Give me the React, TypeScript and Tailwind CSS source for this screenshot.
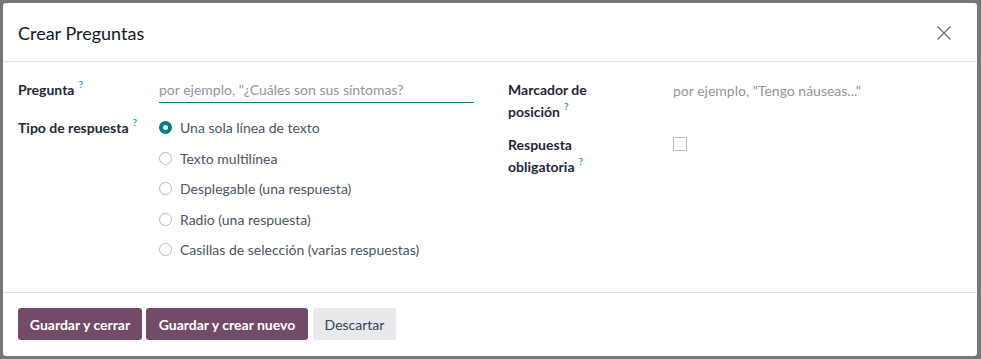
import React, { useState } from 'react';

const font = "font-['Lato','Noto_Sans',sans-serif]";

const Help = () => (
  <span className="inline-block align-top ml-[4px] text-[10px] leading-[10px] font-bold text-[#1f9ec2]">?</span>
);

const options = [
  'Una sola línea de texto',
  'Texto multilínea',
  'Desplegable (una respuesta)',
  'Radio (una respuesta)',
  'Casillas de selección (varias respuestas)',
];

export default function App() {
  const [selected, setSelected] = useState(0);
  const [required, setRequired] = useState(false);

  return (
    <div className={`w-[981px] h-[359px] bg-[#767676] pt-[3px] pl-[3px] pr-[4px] pb-[3px] ${font}`}>
      <div className="h-full bg-white rounded-[3px] flex flex-col text-[14px] text-[#374151]">
        {/* Header */}
        <div className="flex-none h-[59px] px-[15px] pt-[2px] flex items-center justify-between border-b border-[#dee2e6]">
          <h2 className="text-[18px] text-[#111827] leading-none">Crear Preguntas</h2>
          <button className="w-[16px] h-[16px] mr-[10px] text-[#6b7280]">
            <svg viewBox="0 0 16 16" width="16" height="16" fill="none" stroke="currentColor" strokeWidth="1.3">
              <path d="M1.5 1.5 L14.5 14.5 M14.5 1.5 L1.5 14.5" />
            </svg>
          </button>
        </div>

        {/* Body */}
        <div className="flex-1 px-[15px] pt-[17px] flex gap-[34px]">
          {/* Left column */}
          <div className="w-[456px] flex flex-col">
            <div className="flex h-[24px]">
              <label className="w-[141px] font-bold text-[#1f2937] leading-[21px]">
                Pregunta<Help />
              </label>
              <div className="flex-1 border-b border-[#017e84]">
                <input
                  className="w-full leading-[21px] h-[21px] outline-none placeholder:text-[#8f96a0] text-[#374151]"
                  placeholder={'por ejemplo, "¿Cuáles son sus síntomas?'}
                />
              </div>
            </div>
            <div className="flex mt-[14px]">
              <label className="w-[141px] font-bold text-[#1f2937] leading-[21px]">
                Tipo de respuesta<Help />
              </label>
              <div className="flex flex-col gap-[9.5px]">
                {options.map((o, i) => (
                  <label key={o} className="flex items-center gap-[8px] leading-[21px] cursor-pointer text-[#4b5563]" onClick={() => setSelected(i)}>
                    {selected === i ? (
                      <span className="w-[13px] h-[13px] rounded-full border-[4px] border-[#017e84] bg-white" />
                    ) : (
                      <span className="w-[13px] h-[13px] rounded-full border border-[#b5bbc2] bg-white" />
                    )}
                    <span>{o}</span>
                  </label>
                ))}
              </div>
            </div>
          </div>

          {/* Right column */}
          <div className="flex-1 flex flex-col">
            <div className="flex">
              <label className="w-[165px] font-bold text-[#1f2937] leading-[22px] pr-[60px]">
                Marcador de posición<Help />
              </label>
              <input
                className="flex-1 leading-[21px] h-[22px] outline-none placeholder:text-[#8f96a0]"
                placeholder={'por ejemplo, "Tengo náuseas..."'}
              />
            </div>
            <div className="flex mt-[11px]">
              <label className="w-[165px] font-bold text-[#1f2937] leading-[22px] pr-[60px]">
                Respuesta obligatoria<Help />
              </label>
              <button
                onClick={() => setRequired(!required)}
                className={`mt-[3px] w-[14px] h-[14px] rounded-[1px] border ${required ? 'bg-[#017e84] border-[#017e84]' : 'border-[#b5bbc2] bg-white'}`}
              />
            </div>
          </div>
        </div>

        {/* Footer */}
        <div className="flex-none h-[64px] border-t border-[#dee2e6] px-[15px] pt-[15px] flex items-start gap-[4px]">
          <button className="h-[32px] w-[124px] rounded-[3px] bg-[#714b67] text-white font-bold">Guardar y cerrar</button>
          <button className="h-[32px] w-[162px] rounded-[3px] bg-[#714b67] text-white font-bold">Guardar y crear nuevo</button>
          <button className="ml-[1px] h-[32px] w-[83px] rounded-[3px] bg-[#e7e9ed] text-[#374151]">Descartar</button>
        </div>
      </div>
    </div>
  );
}
